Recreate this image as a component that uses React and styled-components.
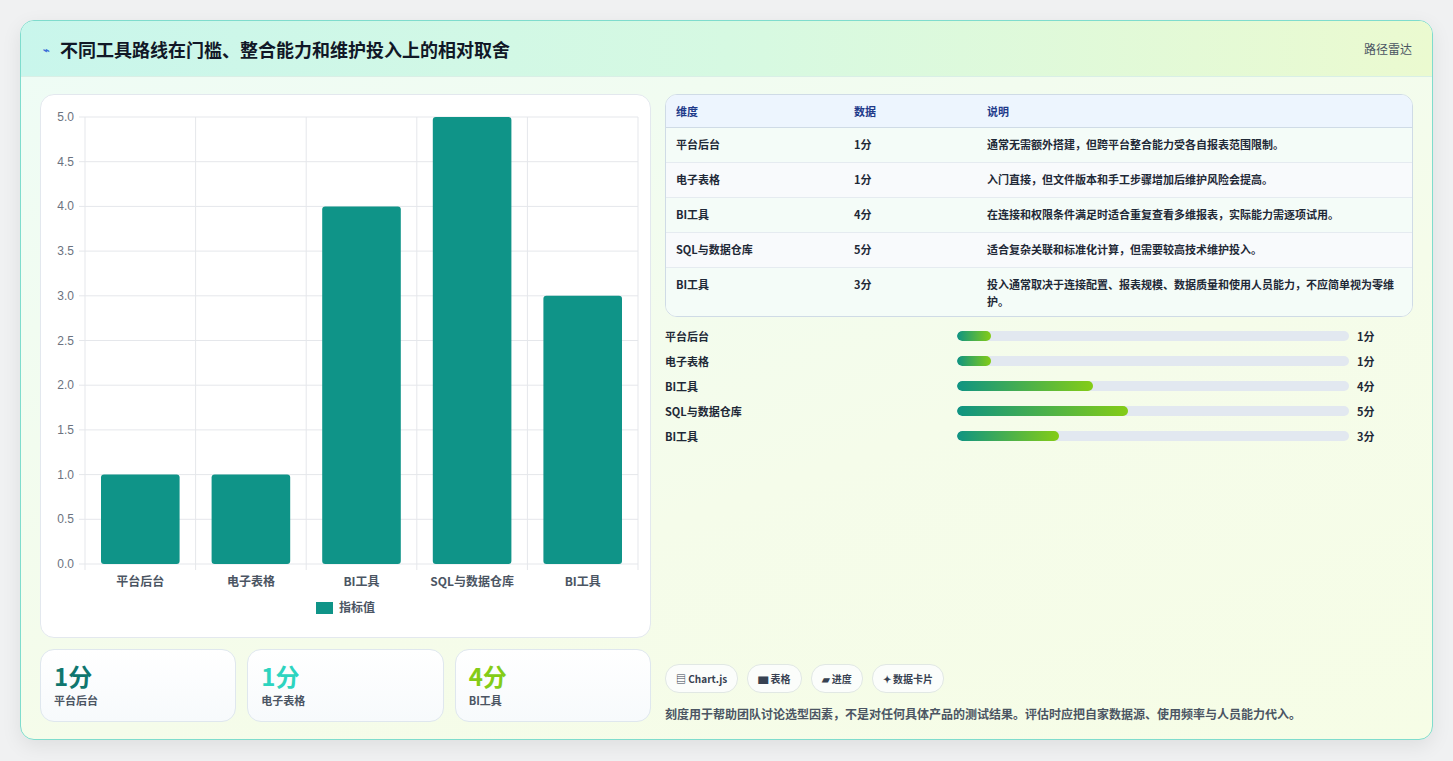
import React from 'react';
import styled, {createGlobalStyle} from 'styled-components';

const GlobalStyle = createGlobalStyle`
  body {
    margin: 0;
    background: #f0f1f2;
    font-family: "Noto Sans CJK SC", "Noto Sans", sans-serif;
  }
`;

const rows = [
    {name: '平台后台', value: 1, note: '通常无需额外搭建，但跨平台整合能力受各自报表范围限制。'},
    {name: '电子表格', value: 1, note: '入门直接，但文件版本和手工步骤增加后维护风险会提高。'},
    {name: 'BI工具', value: 4, note: '在连接和权限条件满足时适合重复查看多维报表，实际能力需逐项试用。'},
    {name: 'SQL与数据仓库', value: 5, note: '适合复杂关联和标准化计算，但需要较高技术维护投入。'},
    {name: 'BI工具', value: 3, note: '投入通常取决于连接配置、报表规模、数据质量和使用人员能力，不应简单视为零维护。'},
];

const Page = styled.div`
  padding: 20px 20px 21px 20px;
  height: 761px;
  box-sizing: border-box;
`;

const Card = styled.div`
  height: 720px;
  box-sizing: border-box;
  border: 1px solid #7fdccd;
  border-radius: 14px;
  overflow: hidden;
  background: linear-gradient(160deg, #eefcf6 0%, #f5fcea 60%, #f6fde6 100%);
  box-shadow: 0 6px 20px rgba(0, 0, 0, 0.08);
  display: flex;
  flex-direction: column;
`;

const Header = styled.div`
  height: 55px;
  flex-shrink: 0;
  display: flex;
  align-items: center;
  justify-content: space-between;
  padding: 0 20px 0 22px;
  background: linear-gradient(90deg, #c9f6ec 0%, #d6f9e2 50%, #ebfad0 100%);
  border-bottom: 1px solid #d9efe6;
`;

const Title = styled.h1`
  margin: 0;
  font-size: 18px;
  font-weight: 700;
  color: #111827;
  display: flex;
  align-items: center;
  gap: 10px;
`;

const Spark = styled.span`
  color: #3b6fd8;
  font-size: 11px;
`;

const Tag = styled.span`
  font-size: 12px;
  color: #4b5563;
`;

const Body = styled.div`
  flex: 1;
  display: grid;
  grid-template-columns: 611px 1fr;
  gap: 14px;
  padding: 17px 19px 19px 19px;
  min-height: 0;
`;

const LeftCol = styled.div`
  display: flex;
  flex-direction: column;
  gap: 11px;
`;

const ChartBox = styled.div`
  height: 544px;
  background: #fff;
  border: 1px solid #e3e8ee;
  border-radius: 14px;
  box-sizing: border-box;
`;

const Stats = styled.div`
  display: grid;
  grid-template-columns: repeat(3, 1fr);
  gap: 11px;
`;

const Stat = styled.div`
  height: 73px;
  box-sizing: border-box;
  border: 1px solid #dfe7ee;
  border-radius: 14px;
  background: linear-gradient(180deg, #fff, #f7fafc);
  padding: 10px 13px;
`;

const StatValue = styled.div`
  font-size: 24px;
  font-weight: 700;
  line-height: 32px;
  color: ${p => p.$color};
`;

const StatLabel = styled.div`
  font-size: 11px;
  color: #4b5563;
  font-weight: 600;
`;

const RightCol = styled.div`
  display: flex;
  flex-direction: column;
`;

const TableBox = styled.div`
  border: 1px solid #cfdbe6;
  border-radius: 12px;
  overflow: hidden;
  background: #fff;
`;

const Table = styled.table`
  width: 100%;
  border-collapse: collapse;
  font-size: 11px;
  color: #1f2937;
  font-weight: 600;
  th {
    background: #edf5fe;
    color: #1e3a8a;
    text-align: left;
    font-weight: 600;
    height: 32px;
    padding: 0 10px;
    border-bottom: 1px solid #cfdbe6;
  }
  td {
    padding: 8px 10px 9px;
    vertical-align: top;
    line-height: 17px;
    border-bottom: 1px solid #e5ebf0;
  }
  tr:nth-child(odd) td { background: #f4fcf8; }
  tr:nth-child(even) td { background: #f8fafc; }
  tr:last-child td { border-bottom: none; padding-bottom: 6px; }
`;

const Bars = styled.div`
  display: flex;
  flex-direction: column;
  gap: 7px;
  margin-top: 10px;
`;

const BarRow = styled.div`
  display: grid;
  grid-template-columns: 284px 392px 1fr;
  align-items: center;
  gap: 8px;
  font-size: 11px;
  height: 18px;
  color: #1f2937;
  font-weight: ${p => (p.$bold ? 700 : 600)};
`;

const Track = styled.div`
  height: 10px;
  border-radius: 5px;
  background: #e2e8f0;
  overflow: hidden;
`;

const Fill = styled.div`
  height: 100%;
  border-radius: 5px;
  background: linear-gradient(90deg, #0f9482, #84cc16);
`;

const Spacer = styled.div`
  flex: 1;
`;

const Chips = styled.div`
  display: flex;
  gap: 9px;
  margin-bottom: 12px;
`;

const Chip = styled.span`
  font-size: 10px;
  font-weight: 700;
  color: #374151;
  background: #fbfdfb;
  border: 1px solid #e1e8e4;
  border-radius: 14px;
  padding: 6px 10px;
  display: inline-flex;
  align-items: center;
  gap: 3px;
`;

const Note = styled.p`
  margin: 0;
  font-size: 12px;
  color: #4b5563;
  font-weight: 600;
`;

function BarChart() {
    const x0 = 44, x1 = 597, y0 = 22, y1 = 469;
    const ticks = [0, 0.5, 1, 1.5, 2, 2.5, 3, 3.5, 4, 4.5, 5];
    const band = (x1 - x0) / 5;
    const yOf = v => y1 - (v / 5) * (y1 - y0);
    return (
        <svg width="610" height="542" style={{display: 'block'}}>
            {ticks.map(t => (
                <g key={t}>
                    <line x1={x0 - 6} x2={x1} y1={yOf(t)} y2={yOf(t)} stroke="#e5e7eb"/>
                    <text x={x0 - 11} y={yOf(t) + 4} fontSize="12" fill="#6b7280" textAnchor="end"
                          fontFamily="Liberation Sans, sans-serif">{t.toFixed(1)}</text>
                </g>
            ))}
            {[0, 1, 2, 3, 4, 5].map(i => (
                <line key={i} x1={x0 + band * i} x2={x0 + band * i} y1={y0} y2={y1 + 6} stroke="#e5e7eb"/>
            ))}
            {rows.map((r, i) => (
                <g key={i}>
                    <rect x={x0 + band * i + 16} y={yOf(r.value)} width={band - 32} height={y1 - yOf(r.value)}
                          rx="3" fill="#0f9488"/>
                    <text x={x0 + band * i + band / 2} y={y1 + 22} fontSize="12" fill="#4b5563"
                          textAnchor="middle" fontWeight="600">{r.name}</text>
                </g>
            ))}
            <rect x="275" y="507" width="17" height="12" fill="#0f9488"/>
            <text x="298" y="517" fontSize="12" fill="#4b5563" fontWeight="600">指标值</text>
        </svg>
    );
}

export default function App() {
    const colors = ['#0f766e', '#2dd4bf', '#84cc16'];
    return (
        <Page>
            <GlobalStyle/>
            <Card>
                <Header>
                    <Title><Spark>⌁</Spark>不同工具路线在门槛、整合能力和维护投入上的相对取舍</Title>
                    <Tag>路径雷达</Tag>
                </Header>
                <Body>
                    <LeftCol>
                        <ChartBox><BarChart/></ChartBox>
                        <Stats>
                            {rows.slice(0, 3).map((r, i) => (
                                <Stat key={i}>
                                    <StatValue $color={colors[i]}>{r.value}分</StatValue>
                                    <StatLabel>{r.name}</StatLabel>
                                </Stat>
                            ))}
                        </Stats>
                    </LeftCol>
                    <RightCol>
                        <TableBox>
                            <Table>
                                <thead>
                                <tr><th style={{width: 158}}>维度</th><th style={{width: 113}}>数据</th><th>说明</th></tr>
                                </thead>
                                <tbody>
                                {rows.map((r, i) => (
                                    <tr key={i}><td>{r.name}</td><td>{r.value}分</td><td>{r.note}</td></tr>
                                ))}
                                </tbody>
                            </Table>
                        </TableBox>
                        <Bars>
                            {rows.map((r, i) => (
                                <BarRow key={i} $bold={i >= 2}>
                                    <span>{r.name}</span>
                                    <Track><Fill style={{width: `${r.value * 8.7}%`}}/></Track>
                                    <span>{r.value}分</span>
                                </BarRow>
                            ))}
                        </Bars>
                        <Spacer/>
                        <Chips>
                            <Chip>▤ Chart.js</Chip>
                            <Chip>▆ 表格</Chip>
                            <Chip>▰ 进度</Chip>
                            <Chip>✦ 数据卡片</Chip>
                        </Chips>
                        <Note>刻度用于帮助团队讨论选型因素，不是对任何具体产品的测试结果。评估时应把自家数据源、使用频率与人员能力代入。</Note>
                    </RightCol>
                </Body>
            </Card>
        </Page>
    );
}
